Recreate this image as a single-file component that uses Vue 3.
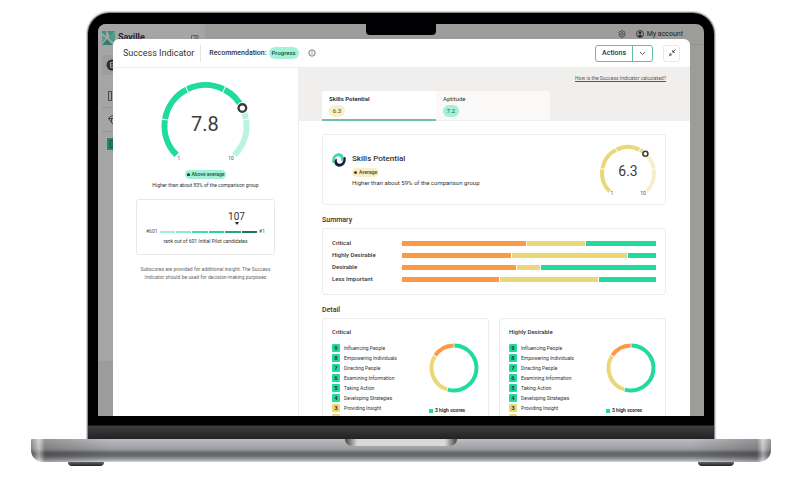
<script setup>
const polar = (cx, cy, r, deg) => {
  const a = ((deg - 90) * Math.PI) / 180
  return [cx + r * Math.cos(a), cy + r * Math.sin(a)]
}
const arc = (cx, cy, r, from, to) => {
  const [x1, y1] = polar(cx, cy, r, from)
  const [x2, y2] = polar(cx, cy, r, to)
  return `M${x1.toFixed(2)} ${y1.toFixed(2)}A${r} ${r} 0 ${to - from > 180 ? 1 : 0} 1 ${x2.toFixed(2)} ${y2.toFixed(2)}`
}
const gauge = (cx, cy, r, value, gap) => {
  const stops = [-135, -81, -27, 27, 81, 135]
  const parts = []
  for (let i = 0; i < 5; i++) {
    const a = stops[i] + (i ? gap : 0)
    const b = stops[i + 1] - (i < 4 ? gap : 0)
    if (value > a && value < b) {
      parts.push({ d: arc(cx, cy, r, a, value), on: true })
      parts.push({ d: arc(cx, cy, r, value, b), on: false })
    } else {
      parts.push({ d: arc(cx, cy, r, a, b), on: b <= value })
    }
  }
  return { parts, knob: polar(cx, cy, r, value) }
}
const big = gauge(45.5, 46, 41, 64, 0.8)
const small = gauge(30, 30, 26, 42, 1)

const ranks = ['#a3f0d6', '#8aeccb', '#3fdfab', '#1fd89c', '#27a57d', '#1c7458']

const summary = [
  { label: 'Critical', low: 125, mid: 58, high: 71 },
  { label: 'Highly Desirable', low: 110, mid: 116, high: 28 },
  { label: 'Desirable', low: 115, mid: 23, high: 116 },
  { label: 'Less Important', low: 98, mid: 99, high: 57 },
]
const skills = [
  [9, 'Influencing People'],
  [8, 'Empowering Individuals'],
  [7, 'Directing People'],
  [6, 'Examining Information'],
  [5, 'Taking Action'],
  [4, 'Developing Strategies'],
  [3, 'Providing Insight'],
  [3, 'Interpreting Data'],
]
const groups = ['Critical', 'Highly Desirable']
const donut = [
  { d: arc(25, 25, 22.5, 1, 196), color: '#1fdb9d' },
  { d: arc(25, 25, 22.5, 198, 302), color: '#ead878' },
  { d: arc(25, 25, 22.5, 304, 359), color: '#ff9843' },
]
</script>

<template>
  <main class="stage">
    <div class="lid">
      <div class="screen">
        <div class="backdrop">
          <nav class="sidebar" aria-label="Main">
            <div class="brand">
              <svg width="13" height="14" viewBox="0 0 13 14">
                <path d="M0 0h4v5L0 2zM5 0h8L8 5.500z" fill="#3f917a" />
                <path d="M13 1v12L6 6.500z" fill="#4c9d86" />
                <path d="M0 14l5-6 6 6z" fill="#367f6b" />
                <path d="M0 4l4 3-4 5z" fill="#57a08b" />
              </svg>
              <span>Saville</span>
              <svg class="collapse" width="8" height="6" viewBox="0 0 8 6" fill="none" stroke="#4a4a4a" stroke-width=".7">
                <path d="M.5.5h6.500v5H.5zM4 .5v5M5 2h1M5 3.500h1" />
              </svg>
            </div>
            <div class="profile">
              <svg width="12" height="12" viewBox="0 0 12 12">
                <circle cx="6" cy="6" r="5.500" fill="#303030" />
                <path d="M8 3.500H4.500v5H8M4.500 6h3" fill="none" stroke="#a5a5a5" />
              </svg>
            </div>
            <div class="nav-item">
              <svg width="8" height="10" viewBox="0 0 8 10" fill="none" stroke="#444"><path d="M.5.5h3v9h-3zM5.500 3v6.500" /></svg>
            </div>
            <div class="nav-item">
              <svg width="10" height="10" viewBox="0 0 10 10" fill="none" stroke="#444"><path d="M.5 3.500L3 1h5l2 2.500M.5 3.500L5 9M.5 3.500H9M3.500 4v4" /></svg>
            </div>
            <div class="nav-item last">
              <svg width="12" height="12" viewBox="0 0 12 12"><rect width="12" height="12" rx="1" fill="#218967" /><path d="M3 2.500h6v7H3zM4.500 5H8M4.500 7H8" fill="none" stroke="#28473d" /></svg>
            </div>
          </nav>
          <div class="topbar">
            <svg width="8" height="8" viewBox="0 0 8 8" fill="none" stroke="#333" stroke-width=".7">
              <path d="M3.200.6h1.600l.4 1 1.100-.1.800 1.400-.7 1 .7 1.100-.8 1.400-1.100-.1-.4 1H3.200l-.4-1-1.100.1L.9 5l.7-1.100-.7-1 .8-1.400 1.100.1z" />
              <circle cx="4" cy="4" r="1.300" />
            </svg>
            <span class="account">
              <svg width="8" height="8" viewBox="0 0 8 8">
                <circle cx="4" cy="4" r="3.500" fill="none" stroke="#262626" stroke-width=".8" />
                <circle cx="4" cy="3" r="1.400" fill="#262626" />
                <path d="M1.600 6.300C2 4.500 6 4.500 6.400 6.300L4 7.300z" fill="#262626" />
              </svg>
              My account
            </span>
          </div>
        </div>
        <div class="notch"></div>

        <section class="modal">
          <header class="head">
            <h1>Success Indicator</h1>
            <div class="recommend">
              <span class="what">Recommendation:</span>
              <span class="pill green">Progress</span>
              <svg width="8" height="8" viewBox="0 0 8 8" fill="none" stroke="#444" stroke-width=".7">
                <circle cx="4" cy="4" r="3.200" /><path d="M4 3.500v2.200M4 2v.8" />
              </svg>
            </div>
            <div class="split">
              <button type="button">Actions</button>
              <button type="button" class="more" aria-label="More actions">
                <svg width="7" height="5" viewBox="0 0 7 5" fill="none" stroke="#333" stroke-width=".8"><path d="M1 1l2.500 2.500L6 1" /></svg>
              </button>
            </div>
            <button type="button" class="shrink" aria-label="Collapse">
              <svg width="8" height="8" viewBox="0 0 8 8" fill="none" stroke="#333" stroke-width=".8">
                <path d="M7.500.5L5 3M4.700 1.200v2.100h2.100M.8 7.200l2-2M1.200 4.900h1.900v1.900" />
              </svg>
            </button>
          </header>

          <div class="body">
            <aside class="left">
              <svg class="gauge" width="92" height="80" viewBox="0 0 92 80">
                <path v-for="(p, i) in big.parts" :key="i" :d="p.d" fill="none" stroke-width="6" :stroke="p.on ? '#1fdb9d' : '#baf4e0'" />
                <circle :cx="big.knob[0]" :cy="big.knob[1]" r="4" fill="#fff" stroke="#fff" stroke-width="4" />
                <circle :cx="big.knob[0]" :cy="big.knob[1]" r="3.800" fill="#fff" stroke="#3c3c3c" stroke-width="2.400" />
                <text x="45" y="51" class="score">7.8</text>
                <text x="19" y="80" class="tick">1</text>
                <text x="71" y="80" class="tick">10</text>
              </svg>
              <span class="badge green"><i class="mark up"></i>Above average</span>
              <p class="compare">Higher than about 83% of the comparison group</p>
              <div class="rank">
                <div class="place">107</div>
                <div class="scale">
                  <span>#601</span>
                  <div class="track">
                    <b v-for="c in ranks" :key="c" :style="{ background: c }"></b>
                  </div>
                  <span>#1</span>
                </div>
                <p>rank out of 601 Initial Pilot candidates</p>
              </div>
              <p class="note">Subscores are provided for additional insight. The Success Indicator should be used for decision-making purposes</p>
            </aside>

            <div class="right">
              <div class="band">
                <a href="#calculation">How is the Success Indicator calculated?</a>
                <div class="tabs" role="tablist">
                  <button type="button" role="tab" aria-selected="true" class="tab active">
                    Skills Potential<span class="chip yellow">6.3</span>
                  </button>
                  <button type="button" role="tab" aria-selected="false" class="tab">
                    Aptitude<span class="chip green">7.2</span>
                  </button>
                </div>
              </div>

              <div class="content">
                <section class="card hero">
                  <svg class="swirl" width="14" height="14" viewBox="0 0 14 14">
                    <path d="M.4 9.500C-.6 4 3 .2 6.800.3c3.700.2 5.200 3 4.600 5.700-.3 1.500-1.200 2.300-2.300 2.300C9.600 5.600 8.600 3.300 6.200 3.300 3.500 3.300 2.300 6 2.700 9.400 2 10.200.8 10.300.4 9.500z" fill="#45d3ab" />
                    <path d="M13.600 4.500c1 5.500-2.600 9.300-6.400 9.200-3.700-.2-5.200-3-4.600-5.700.3-1.500 1.200-2.300 2.300-2.300-.5 2.700.5 5 2.900 5 2.700 0 3.900-2.700 3.500-6.100.7-.8 1.900-.9 2.300-.1z" fill="#171f45" />
                  </svg>
                  <div class="about">
                    <h2>Skills Potential</h2>
                    <span class="badge yellow"><i class="mark"></i>Average</span>
                    <p>Higher than about 59% of the comparison group</p>
                  </div>
                  <svg width="60" height="54" viewBox="0 0 60 54">
                    <path v-for="(p, i) in small.parts" :key="i" :d="p.d" fill="none" stroke-width="4" :stroke="p.on ? '#ead878' : '#f7efcb'" />
                    <circle :cx="small.knob[0]" :cy="small.knob[1]" r="3" fill="#fff" stroke="#fff" stroke-width="2" />
                    <circle :cx="small.knob[0]" :cy="small.knob[1]" r="2.500" fill="#fff" stroke="#3c3c3c" stroke-width="1.600" />
                    <text x="30" y="33" class="score mid">6.3</text>
                    <text x="14" y="52" class="tick">1</text>
                    <text x="45" y="52" class="tick">10</text>
                  </svg>
                </section>

                <h3>Summary</h3>
                <section class="card summary">
                  <div v-for="row in summary" :key="row.label" class="row">
                    <span>{{ row.label }}</span>
                    <div class="bar">
                      <b class="low" :style="{ flexGrow: row.low }"></b>
                      <b class="mid" :style="{ flexGrow: row.mid }"></b>
                      <b class="high" :style="{ flexGrow: row.high }"></b>
                    </div>
                  </div>
                </section>

                <h3>Detail</h3>
                <div class="details">
                  <section v-for="g in groups" :key="g" class="card detail">
                    <h4>{{ g }}</h4>
                    <div class="cols">
                      <ul>
                        <li v-for="[n, name] in skills" :key="name">
                          <b :class="{ amber: n < 4 }">{{ n }}</b>{{ name }}
                        </li>
                      </ul>
                      <div class="chart">
                        <svg width="50" height="50" viewBox="0 0 50 50">
                          <path v-for="s in donut" :key="s.color" :d="s.d" :stroke="s.color" fill="none" stroke-width="4" />
                        </svg>
                        <p>3 high scores</p>
                      </div>
                    </div>
                  </section>
                </div>
              </div>
            </div>
          </div>
        </section>
      </div>
    </div>
    <div class="base"><div class="lip"></div></div>
    <div class="feet"><i></i><i></i></div>
  </main>
</template>

<style>
body { background: #fff; }
</style>

<style scoped>
* { box-sizing: border-box; margin: 0; padding: 0; }
.stage { padding: 12px 29px 0 31px; font-family: Roboto, "Liberation Sans", sans-serif; color: #333; line-height: 1; }
button { font: inherit; color: inherit; background: none; border: 0; cursor: pointer; }
svg { display: block; flex: none; overflow: visible; }

.lid {
  margin: 0 56px; padding: 11px 10px 23px; border: 1px solid #8a8a8a; border-bottom: 0;
  border-radius: 22px 22px 0 0;
  background: linear-gradient(to top, #222 0, #3d3d3d 13px, #000003 14px);
  box-shadow: 0 0 1px 1px #d5d5d5;
}
.screen { position: relative; aspect-ratio: 606 / 392; overflow: hidden; border-radius: 8px 8px 0 0; }
.backdrop { display: flex; height: 100%; background: #9c9c9a; }
.sidebar { width: 107px; height: 86%; padding: 7px 4px 0; background: #a5a5a5; }
.brand { display: flex; align-items: flex-start; gap: 3px; color: #1f2340; font-size: 9px; font-weight: 700; }
.brand span { padding-top: 2px; }
.brand .collapse { margin: 4px 2px 0 auto; }
.profile { height: 20px; margin-top: 10px; padding: 4px; border-radius: 3px; background: #9d9d9d; }
.nav-item { display: flex; align-items: center; height: 24px; padding-left: 6px; border-bottom: 1px solid #959595; }
.profile + .nav-item { margin-top: 9px; }
.nav-item.last { padding-left: 5px; border-bottom: 0; }
.topbar { display: flex; flex: 1; justify-content: flex-end; align-items: center; gap: 10px; height: 21px; padding-right: 21px; border-bottom: 1px solid #919191; color: #222; font-size: 7px; }
.account { display: flex; align-items: center; gap: 3px; }
.notch { position: absolute; top: 0; left: 50%; width: 70px; height: 11px; margin-left: -35px; border-radius: 0 0 4px 4px; background: #000003; }

.modal { position: absolute; inset: 15px 14px 0 15px; display: flex; flex-direction: column; overflow: hidden; border-radius: 6px 6px 0 0; background: #fff; }
.head { display: flex; flex: none; align-items: center; height: 29px; padding: 0 10px; border-bottom: 1px solid #ececec; }
h1 { padding-right: 6px; border-right: 1px solid #e4e4e4; font-size: 9px; font-weight: 400; line-height: 17px; }
.recommend { display: flex; flex: 1; align-items: center; gap: 2px; padding-left: 8px; font-size: 7px; font-weight: 500; line-height: 12px; }
.recommend svg { margin-left: 7px; }
.pill { padding: 0 3px; border-radius: 6px; font-size: 6px; }
.green { background: #a3f1d8; color: #17543f; }
.yellow { background: #f7efc8; color: #4c4520; }
.split { display: flex; height: 17px; margin-right: 10px; border: 1px solid #62bea0; border-radius: 3px; font-size: 7px; font-weight: 500; line-height: 15px; }
.split button { padding: 0 6px; }
.split .more { border-left: 1px solid #62bea0; }
.shrink { display: grid; place-items: center; width: 17px; height: 17px; border: 1px solid #e8e8e8; border-radius: 3px; }

.body { display: flex; flex: 1; min-height: 0; }
.left { display: flex; flex: none; flex-direction: column; align-items: center; width: 186px; padding: 12px 23px 0; border-right: 1px solid #eee; text-align: center; font-size: 5px; }
.score { font-size: 20px; text-anchor: middle; fill: #3c3c3c; }
.score.mid { font-size: 14px; }
.tick { font-size: 5px; text-anchor: middle; fill: #555; }
.badge { display: flex; align-items: center; gap: 2px; height: 9px; padding: 0 2px; border-radius: 5px; font-size: 5px; font-weight: 500; }
.left .badge { margin-top: 10px; }
.mark { width: 3px; height: 3px; border-radius: 50%; background: currentColor; }
.mark.up { border-radius: 50% 50% 0 0; }
.compare { margin-top: 4px; white-space: nowrap; }
.rank { align-self: stretch; margin-top: 11px; padding: 12px 9px 10px; border: 1px solid #e8e8e8; border-radius: 3px; }
.place { display: flex; flex-direction: column; align-items: center; width: 17px; margin-left: 82px; font-size: 10px; }
.place::after { content: ""; border: 2px solid transparent; border-top: 3px solid #222; border-bottom: 0; }
.scale { display: flex; align-items: center; gap: 2px; margin-top: 4px; color: #555; }
.track { display: flex; flex: 1; gap: 1px; }
.track b { flex: 1; height: 2px; }
.rank p { margin-top: 5px; }
.note { margin: 10px 0 0; color: #666; line-height: 8px; }

.right { display: flex; flex: 1; flex-direction: column; min-width: 0; }
.band { flex: none; padding: 8px 24px 0 23px; background: #f0efed; text-align: right; }
.band a { display: block; color: #555; font-size: 5px; }
.tabs { display: flex; margin-top: 10px; }
.tab { display: flex; flex-direction: column; align-items: flex-start; gap: 3px; width: 114px; height: 30px; padding: 5px 7px 0; border-bottom: 1px solid #f0efed; border-radius: 0 3px 0 0; background: #faf9f7; font-size: 6px; }
.tab.active { border-bottom: 2px solid #73bfa6; border-radius: 3px 0 0; background: #fff; font-weight: 700; }
.chip { width: 16px; border-radius: 6px; font-size: 6px; font-weight: 400; line-height: 12px; text-align: center; }
.content { padding: 13px 24px 0 23px; }
.card { border: 1px solid #ececec; border-radius: 3px; }
.hero { display: flex; align-items: flex-start; height: 71px; padding: 8px 7px 0 9px; }
.hero .swirl { margin-top: 10px; }
.about { display: flex; flex: 1; flex-direction: column; align-items: flex-start; padding: 12px 0 0 6px; }
.about h2 { font-size: 8px; font-weight: 500; }
.about .badge { margin-top: 5px; }
.about p { margin-top: 3px; font-size: 6px; }
h3 { margin-top: 12px; font-size: 7px; font-weight: 500; }
.summary { display: flex; flex-direction: column; margin-top: 4px; padding: 8px 9px 9px; }
.row { display: flex; align-items: center; height: 12px; font-size: 6px; font-weight: 500; }
.row span { flex: none; width: 70px; }
.bar { display: flex; flex: 1; gap: 1px; height: 5px; }
.bar b { flex-basis: 0; }
.low { background: #ff9843; }
.mid { background: #ead878; }
.high { background: #1fdb9d; }
.details { display: grid; grid-template-columns: 1fr 1fr; gap: 10px; margin-top: 4px; }
.detail { padding: 10px 9px; }
h4 { font-size: 6px; font-weight: 500; }
.cols { display: flex; justify-content: space-between; margin-top: 8px; }
ul { list-style: none; font-size: 5px; }
li { display: flex; align-items: center; gap: 4px; height: 10px; white-space: nowrap; }
li b { width: 8px; border-radius: 1px; background: #1fdb9d; font-size: 6px; line-height: 8px; text-align: center; }
li .amber { background: #ead878; }
.chart p { display: flex; align-items: center; gap: 2px; margin-top: 15px; font-size: 5px; font-weight: 700; }
.chart p::before { content: ""; width: 4px; height: 4px; background: #1fdb9d; }

.base {
  display: flex; justify-content: center; height: 23px; border-radius: 1px 1px 12px 12px;
  background:
    linear-gradient(to right, #0003 0, #fff6 8px, #0003 14px, transparent 80px, transparent calc(100% - 80px), #0003 calc(100% - 14px), #fff6 calc(100% - 8px), #0003),
    linear-gradient(#bcbdc0 0, #9d9ea1 10px, #636466 14px, #6a6b6d 17px, #a8a9ab 21px, #d5d5d5);
}
.lip { width: 112px; height: 7px; border-radius: 0 0 8px 8px; background: linear-gradient(to right, #444, #d8d8d8 12px, #d8d8d8 calc(100% - 12px), #444); }
.feet { display: flex; justify-content: space-between; padding: 0 37px; }
.feet i { width: 36px; height: 4px; border-radius: 0 0 6px 6px; background: linear-gradient(#666, #222); }
</style>
